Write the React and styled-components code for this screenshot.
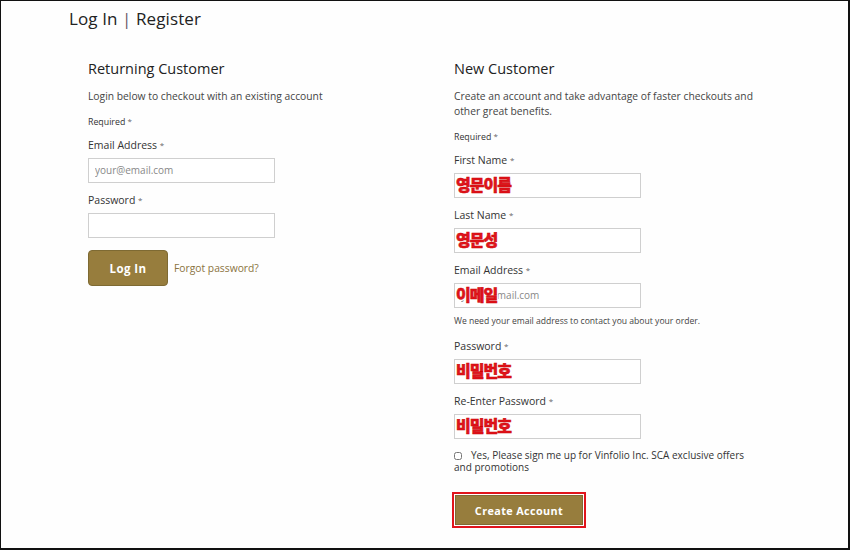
import React from "react";
import styled, { createGlobalStyle } from "styled-components";

const Global = createGlobalStyle`
  html, body { margin: 0; padding: 0; background: #fff; }
  body { font-family: "Open Sans", "Liberation Sans", sans-serif; color: #333; }
  * { box-sizing: border-box; }
`;

const Frame = styled.div`
  width: 850px;
  height: 550px;
  border-style: solid;
  border-color: #111;
  border-width: 1px 2px 2px 1px;
  background: #fefefe;
  overflow: hidden;
`;

const Title = styled.h1`
  margin: 6px 0 0 68px;
  font-size: 17px;
  line-height: 24px;
  font-weight: 400;
  color: #222;
  letter-spacing: 0.1px;
`;

const Pipe = styled.span`
  color: #6a5a68;
`;

const Columns = styled.div`
  display: grid;
  grid-template-columns: 366px 1fr;
  padding-left: 87px;
  margin-top: 29px;
`;

const Column = styled.section`
  display: flex;
  flex-direction: column;
  align-items: flex-start;
`;

const Heading = styled.h2`
  margin: 0;
  font-size: 14.5px;
  line-height: 18px;
  font-weight: 400;
  color: #222;
`;

const Intro = styled.p`
  margin: 11px 0 0;
  font-size: 10.3px;
  line-height: 15px;
  color: #444;
  max-width: ${(p) => p.$width || "300px"};
`;

const Required = styled.div`
  margin-top: 12px;
  height: 12px;
  font-size: 8.8px;
  line-height: 12px;
  color: #333;
`;

const Label = styled.label`
  display: block;
  margin-top: ${(p) => p.$top || "11px"};
  height: 14px;
  font-size: 10.5px;
  line-height: 14px;
  color: #333;
`;

const Star = styled.span`
  font-size: 8px;
  line-height: 0;
  color: #666;
  vertical-align: 1px;
`;

const InputWrap = styled.div`
  position: relative;
  margin-top: 5px;
  width: 187px;
  height: 25px;
`;

const Input = styled.input`
  width: 100%;
  height: 100%;
  border: 1px solid #cfcfcf;
  background: #fff;
  padding: 0 6px;
  font-family: inherit;
  font-size: 10px;
  color: #333;
  outline: none;
  &::placeholder { color: #888; }
`;

const Annotation = styled.span`
  position: absolute;
  left: 2px;
  top: 1px;
  font-family: "Noto Sans CJK KR", sans-serif;
  font-weight: 900;
  font-size: 16px;
  line-height: 22px;
  letter-spacing: -1px;
  color: #e0141c;
  -webkit-text-stroke: 0.5px #c00;
  text-shadow: 1px 0 0 #fff, -1px 0 0 #fff, 0 1px 0 #fff, 0 -1px 0 #fff,
    1px 1px 0 #fff, -1px -1px 0 #fff, 1px -1px 0 #fff, -1px 1px 0 #fff;
  pointer-events: none;
`;

const Note = styled.div`
  margin-top: 8px;
  font-size: 8.6px;
  line-height: 12px;
  color: #444;
`;

const Actions = styled.div`
  display: flex;
  align-items: center;
  gap: 6px;
  margin-top: 13px;
`;

const Button = styled.button`
  font-family: inherit;
  font-weight: 700;
  color: #fff;
  background: #977d3d;
  border: 1px solid #7e6a33;
  border-radius: ${(p) => (p.$rounded ? "4px" : "0")};
  width: ${(p) => p.$width};
  height: ${(p) => p.$height};
  font-size: ${(p) => p.$size || "11px"};
  letter-spacing: 0.4px;
  cursor: pointer;
`;

const Highlight = styled.div`
  margin: 19px 0 0 -2px;
  border: 2px solid #e0141c;
  padding: 1px;
  background: #fff;
`;

const ForgotLink = styled.a`
  font-size: 10.3px;
  color: #8a7340;
  text-decoration: none;
`;

const CheckRow = styled.div`
  margin-top: 11px;
  width: 298px;
  font-size: 10px;
  line-height: 12px;
  color: #333;
`;

const Check = styled.input`
  width: 8px;
  height: 8px;
  margin: 0 9px 0 0;
  vertical-align: -1px;
`;

function Field({ label, type = "text", placeholder, note, top }) {
  return (
    <>
      <Label $top={top}>
        {label} <Star>*</Star>
      </Label>
      <InputWrap>
        <Input type={type} placeholder={placeholder} />
        {note && <Annotation>{note}</Annotation>}
      </InputWrap>
    </>
  );
}

export default function App() {
  return (
    <>
      <Global />
      <Frame>
        <Title>
          Log In <Pipe>|</Pipe> Register
        </Title>
        <Columns>
          <Column>
            <Heading>Returning Customer</Heading>
            <Intro>Login below to checkout with an existing account</Intro>
            <Required>
              Required <Star>*</Star>
            </Required>
            <Field label="Email Address" placeholder="your@email.com" top="10px" />
            <Field label="Password" type="password" />
            <Actions>
              <Button $rounded $width="80px" $height="36px" $size="11.5px">
                Log In
              </Button>
              <ForgotLink href="#">Forgot password?</ForgotLink>
            </Actions>
          </Column>
          <Column>
            <Heading>New Customer</Heading>
            <Intro $width="300px">
              Create an account and take advantage of faster checkouts and
              other great benefits.
            </Intro>
            <Required>
              Required <Star>*</Star>
            </Required>
            <Field label="First Name" note="영문이름" top="10px" />
            <Field label="Last Name" note="영문성" />
            <Field label="Email Address" placeholder="your@email.com" note="이메일" />
            <Note>We need your email address to contact you about your order.</Note>
            <Field label="Password" note="비밀번호" top="12px" />
            <Field label="Re-Enter Password" note="비밀번호" />
            <CheckRow>
              <Check type="checkbox" />
              Yes, Please sign me up for Vinfolio Inc. SCA exclusive offers and
              promotions
            </CheckRow>
            <Highlight>
              <Button $width="128px" $height="30px" $size="10.8px">
                Create Account
              </Button>
            </Highlight>
          </Column>
        </Columns>
      </Frame>
    </>
  );
}
